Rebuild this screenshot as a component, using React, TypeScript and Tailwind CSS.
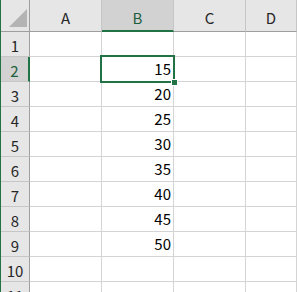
import React from 'react';

const rows = [1, 2, 3, 4, 5, 6, 7, 8, 9, 10, 11];
const values: Record<number, number> = { 2: 15, 3: 20, 4: 25, 5: 30, 6: 35, 7: 40, 8: 45, 9: 50 };
const cols = ['A', 'B', 'C', 'D'];

function ColHeader({ name }: { name: string }) {
  const selected = name === 'B';
  const w = name === 'D' ? 'flex-1' : 'w-[72px]';
  return (
    <div
      className={`${w} h-full flex items-center justify-center border-r border-r-[#c6c6c6] ${
        selected ? 'bg-[#d2d2d2] border-b-2 border-b-[#217346] text-[#1d5e3c]' : 'bg-[#e6e6e6] border-b border-b-[#9e9e9e] text-[#262626]'
      }`}
    >
      <span className="pt-[4px]">{name}</span>
    </div>
  );
}

export default function App() {
  return (
    <div
      className="relative w-[297px] h-[292px] overflow-hidden bg-white border-l border-l-[#217346] text-[15px] leading-none"
      style={{ fontFamily: '"Noto Sans CJK JP", "Noto Sans", sans-serif' }}
    >
      {/* header row */}
      <div className="flex h-[32px] bg-[#e6e6e6]">
        <div className="w-[29px] h-full flex items-end justify-end pr-[2px] pb-[4px] border-r border-b border-[#9e9e9e] bg-[#e6e6e6]">
          <svg width="18" height="18" viewBox="0 0 18 18">
            <polygon points="18,0 18,18 0,18" fill="#b4b4b4" />
          </svg>
        </div>
        {cols.map((c) => (
          <ColHeader key={c} name={c} />
        ))}
      </div>

      {rows.map((r) => {
        const selected = r === 2;
        return (
          <div key={r} className="flex h-[25px]">
            <div
              className={`w-[29px] h-full flex items-center justify-center border-b border-b-[#c6c6c6] ${
                selected
                  ? 'bg-[#d2d2d2] border-r-2 border-r-[#217346] text-[#1d5e3c]'
                  : 'bg-[#e6e6e6] border-r border-r-[#9e9e9e] text-[#262626]'
              }`}
            >
              <span className="pt-[3px]">{r}</span>
            </div>
            {cols.map((c) => (
              <div
                key={c}
                className={`${c === 'D' ? 'flex-1' : 'w-[72px]'} h-full flex items-end justify-end pr-[2px] pb-[5px] border-r border-b border-[#d4d4d4] text-black`}
              >
                {c === 'B' && values[r] !== undefined ? values[r] : ''}
              </div>
            ))}
          </div>
        );
      })}

      {/* selection of B2 */}
      <div className="absolute left-[99px] top-[55px] w-[75px] h-[28px] border-2 border-[#217346] pointer-events-none" />
      <div className="absolute left-[170px] top-[79px] w-[7px] h-[7px] bg-[#217346] border border-white" />
    </div>
  );
}
